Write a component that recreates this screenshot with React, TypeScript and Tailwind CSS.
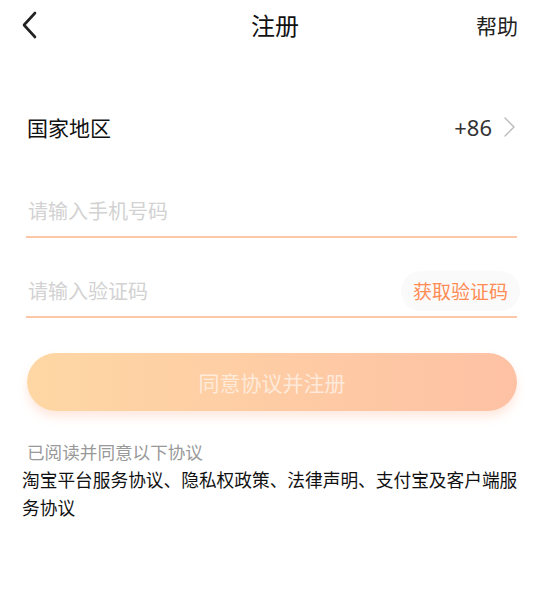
import React from "react";

export default function App() {
  const font = { fontFamily: '"Noto Sans CJK SC", "Noto Sans", sans-serif' };
  return (
    <div className="w-[550px] h-[600px] bg-white text-[#222]" style={font}>
      {/* header */}
      <div className="h-[50px] grid grid-cols-[1fr_auto_1fr] items-center">
        <div className="pl-[20px] flex items-center">
          <svg width="20" height="28" viewBox="0 0 20 28" fill="none">
            <path d="M15 2 L4 14 L15 26" stroke="#222" strokeWidth="2.6" strokeLinecap="round" strokeLinejoin="round" />
          </svg>
        </div>
        <div className="text-[24px] leading-none text-[#111]">注册</div>
        <div className="flex justify-end pr-[32px] text-[21px] leading-none text-[#222]">帮助</div>
      </div>

      {/* country */}
      <div className="mt-[57px] h-[40px] flex items-center justify-between pl-[27px] pr-[34px]">
        <span className="text-[21px] leading-none text-[#111]">国家地区</span>
        <div className="flex items-center gap-[11px]">
          <span className="text-[22px] leading-none text-[#333]" style={{ fontFamily: '"Noto Sans", sans-serif' }}>+86</span>
          <svg width="13" height="22" viewBox="0 0 13 22" fill="none">
            <path d="M2 2 L11 11 L2 20" stroke="#bbb" strokeWidth="1.4" strokeLinecap="round" strokeLinejoin="round" />
          </svg>
        </div>
      </div>

      {/* phone */}
      <div className="mt-[34px] ml-[26px] mr-[33px] h-[57px] flex items-center border-b-2 border-[#fec8a8]">
        <span className="text-[20px] leading-none text-[#d2d2d2] pl-[2px] pt-[5px]">请输入手机号码</span>
      </div>

      {/* code */}
      <div className="mt-[24px] ml-[26px] mr-[33px] h-[56px] flex items-center justify-between border-b-2 border-[#fec8a8]">
        <span className="text-[20px] leading-none text-[#d2d2d2] pl-[2px] pt-[3px]">请输入验证码</span>
        <span className="h-[40px] px-[12px] rounded-full bg-[#fafafa] flex items-center text-[19px] leading-none text-[#ff8c55] -mr-[3px] mt-[3px]">获取验证码</span>
      </div>

      {/* button */}
      <div className="mt-[35px] ml-[27px] mr-[33px] h-[58px] rounded-full bg-gradient-to-r from-[#fed7a4] to-[#fec1a4] shadow-[0_6px_10px_rgba(254,190,160,0.35)] flex items-center justify-center">
        <span className="text-[21px] leading-none text-white/60">同意协议并注册</span>
      </div>

      {/* agreement */}
      <div className="mt-[32px] pl-[27px] text-[17.6px] leading-none text-[#999]">已阅读并同意以下协议</div>
      <div className="mt-[4px] pl-[22px] pr-[28px] text-[17.7px] leading-[28px] text-[#111]">
        淘宝平台服务协议、隐私权政策、法律声明、支付宝及客户端服务协议
      </div>
    </div>
  );
}
